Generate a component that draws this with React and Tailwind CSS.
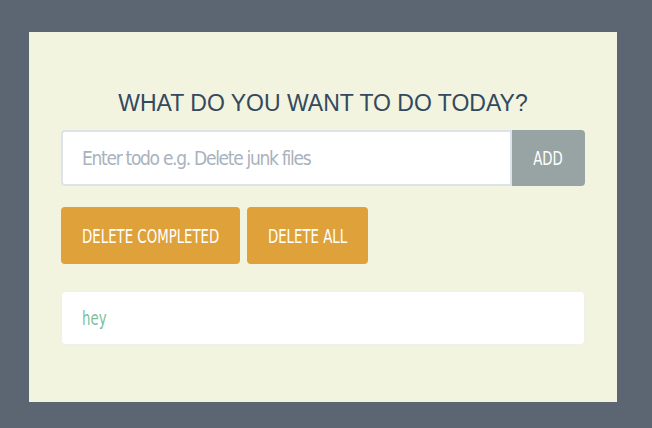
import React, { useState } from 'react';

// condensed face stands in for the narrow display font; squeezed a bit more with scale-x
const narrow = "font-['DejaVu_Sans_Condensed',sans-serif]";

export default function App() {
  const [todos] = useState([{ id: 1, text: 'hey' }]);

  return (
    <div className="min-h-[428px] w-full bg-[#5c6572] pt-8 pl-[29px] pr-[35px] pb-[26px]">
      <div className="bg-[#f2f4df] h-[370px] px-8 pt-[60px]">
        <h1 className="text-center text-[23px] text-[#34495e] uppercase leading-none font-['Liberation_Sans',Arial,sans-serif]">
          What do you want to do today?
        </h1>

        <div className="flex mt-[15px]">
          <input
            className={`flex-1 h-14 bg-white border-2 border-[#dde3ea] rounded-l px-[19px] text-[19px] tracking-[-1.3px] text-[#34495e] placeholder-[#a9b2bd] outline-none ${narrow}`}
            placeholder="Enter todo e.g. Delete junk files"
          />
          <button className={`w-[73px] h-14 bg-[#98a4a4] text-white text-[20px] uppercase rounded-r ${narrow}`}>
            <span className="inline-block scale-x-[0.74]">Add</span>
          </button>
        </div>

        <div className="flex gap-[7px] mt-[21px]">
          <button className={`h-[57px] w-[179px] bg-[#dfa13a] text-white text-[20px] uppercase rounded flex items-center justify-center whitespace-nowrap ${narrow}`}>
            <span className="inline-block scale-x-[0.74]">Delete completed</span>
          </button>
          <button className={`h-[57px] w-[121px] bg-[#dfa13a] text-white text-[20px] uppercase rounded flex items-center justify-center whitespace-nowrap ${narrow}`}>
            <span className="inline-block scale-x-[0.74]">Delete all</span>
          </button>
        </div>

        <ul className="mt-[27px]">
          {todos.map(t => (
            <li
              key={t.id}
              className={`h-[54px] bg-white border border-[#eef0ea] rounded flex items-center px-[20px] text-[20px] text-[#7dbf9e] ${narrow}`}
            >
              <span className="inline-block origin-left scale-x-[0.74]">{t.text}</span>
            </li>
          ))}
        </ul>
      </div>
    </div>
  );
}
